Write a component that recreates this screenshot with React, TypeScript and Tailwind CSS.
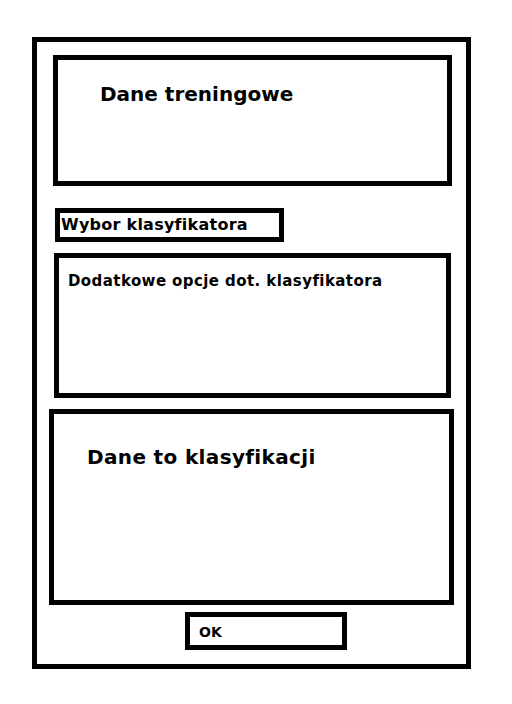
export default function App() {
  return (
    <div className="w-[512px] h-[704px] bg-white pt-[37px] pl-[32px] font-['DejaVu_Sans',Verdana,sans-serif] font-bold text-black">
      <div className="w-[439px] h-[632px] border-[5px] border-black flex flex-col items-start">
        {/* Dane treningowe */}
        <div className="ml-[16px] mt-[13px] w-[399px] h-[131px] border-[5px] border-black pt-[24px] pl-[42px]">
          <div className="text-[20px] leading-[20px]">Dane treningowe</div>
        </div>

        {/* Wybor klasyfikatora */}
        <div className="ml-[18px] mt-[22px] w-[229px] h-[34px] border-[5px] border-black pt-[4px] pl-px">
          <div className="text-[16px] leading-[16px] tracking-[0.25px]">Wybor klasyfikatora</div>
        </div>

        {/* Dodatkowe opcje */}
        <div className="ml-[17px] mt-[11px] w-[397px] h-[145px] border-[5px] border-black pt-[16px] pl-[9px]">
          <div className="text-[15px] leading-[15px] tracking-[0.42px]">Dodatkowe opcje dot. klasyfikatora</div>
        </div>

        {/* Dane do klasyfikacji */}
        <div className="ml-[12px] mt-[11px] w-[405px] h-[196px] border-[5px] border-black pt-[33px] pl-[33px]">
          <div className="text-[20px] leading-[20px] tracking-[0.35px]">Dane to klasyfikacji</div>
        </div>

        {/* OK */}
        <div className="ml-[148px] mt-[7px] w-[162px] h-[38px] border-[5px] border-black pt-[8px] pl-[9px]">
          <div className="text-[14px] leading-[14px]">OK</div>
        </div>
      </div>
    </div>
  );
}
